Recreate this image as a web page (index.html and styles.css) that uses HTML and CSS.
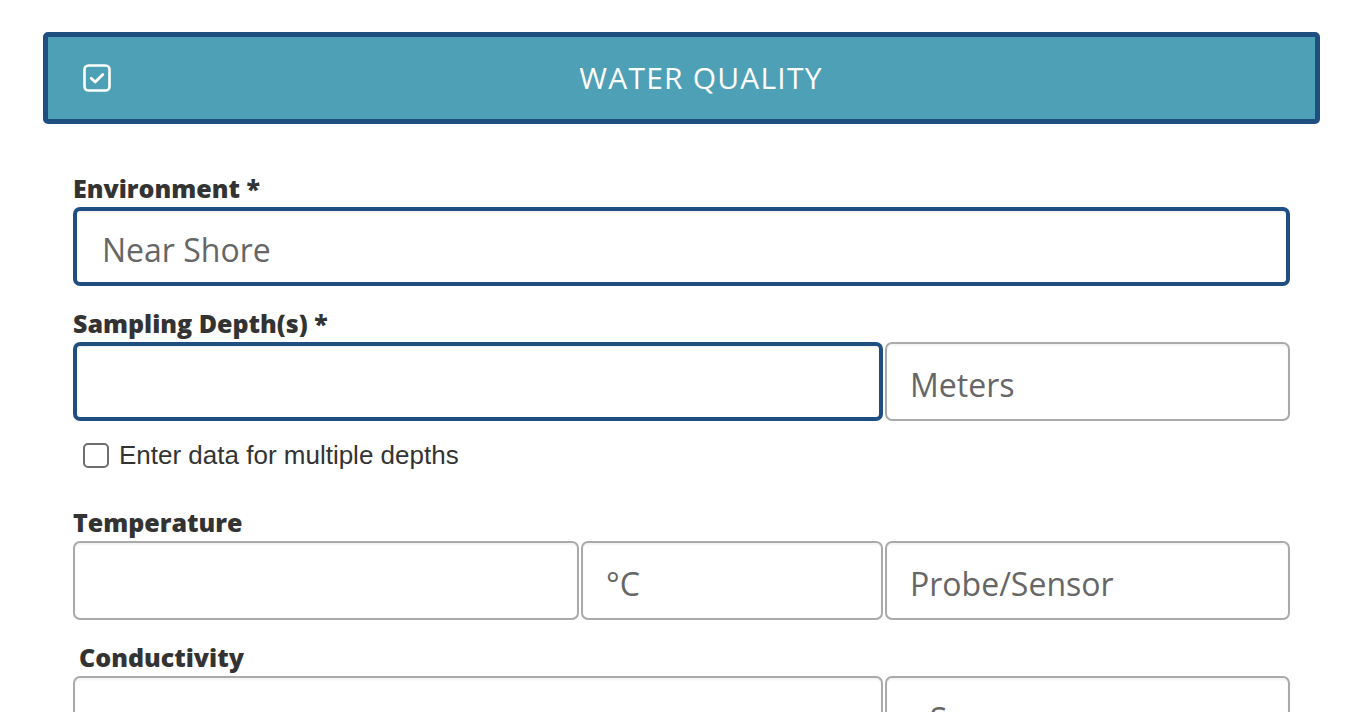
FILE: index.html
```html
<!DOCTYPE html>
<html lang="en">
<head>
<meta charset="utf-8">
<title>Water Quality</title>
<link rel="stylesheet" href="styles.css">
</head>
<body>
<div class="page">
  <div class="section-header">
    <svg class="hdr-icon" width="28" height="28" viewBox="0 0 28 28" aria-hidden="true">
      <rect x="1.5" y="1.5" width="25" height="25" rx="4" ry="4" fill="none" stroke="#fff" stroke-width="2.6"/>
      <path d="M8.2 14.2 L12.2 18 L19.8 10.4" fill="none" stroke="#fff" stroke-width="2.8" stroke-linecap="round" stroke-linejoin="round"/>
    </svg>
    <div class="hdr-title">WATER QUALITY</div>
  </div>

  <form class="form">
    <div class="field">
      <label class="lbl">Environment *</label>
      <div class="row row-1">
        <input class="inp active" type="text" value="Near Shore">
      </div>
    </div>

    <div class="field">
      <label class="lbl">Sampling Depth(s) *</label>
      <div class="row row-2">
        <input class="inp active" type="text" value="">
        <input class="inp" type="text" value="Meters">
      </div>
      <div class="check-row">
        <span class="box"></span>
        <span class="check-text">Enter data for multiple depths</span>
      </div>
    </div>

    <div class="field field-temp">
      <label class="lbl">Temperature</label>
      <div class="row row-3">
        <input class="inp" type="text" value="">
        <input class="inp" type="text" value="°C">
        <input class="inp" type="text" value="Probe/Sensor">
      </div>
    </div>

    <div class="field">
      <label class="lbl lbl-indent">Conductivity</label>
      <div class="row row-2">
        <input class="inp" type="text" value="">
        <input class="inp" type="text" value="µS">
      </div>
    </div>
  </form>
</div>
</body>
</html>
```

FILE: styles.css
```css
* { box-sizing: border-box; }

html, body {
  margin: 0;
  padding: 0;
  background: #ffffff;
  overflow: hidden;
}

body {
  font-family: "Open Sans", "Liberation Sans", Arial, sans-serif;
  color: #333333;
}

.page {
  padding: 32px 30px 0 43px;
  width: 1350px;
}

.section-header {
  width: 1277px;
  height: 92px;
  background: #4da0b5;
  border: 5px solid #1f4f80;
  border-radius: 5px;
  display: flex;
  align-items: center;
  padding: 0 24px 0 35px;
}

.hdr-icon {
  flex: 0 0 28px;
  display: block;
}

.hdr-title {
  flex: 1;
  text-align: center;
  color: #ffffff;
  font-size: 30px;
  letter-spacing: 1.2px;
  line-height: 38px;
  font-weight: 400;
}

.form {
  margin: 48px 0 0 30px;
  width: 1217px;
}

.field {
  margin-bottom: 21px;
}

.field-temp {
  margin-bottom: 21px;
}

.lbl {
  display: block;
  font-size: 25px;
  line-height: 32px;
  font-weight: 800;
  color: #333333;
  margin-bottom: 3px;
}

.lbl-indent {
  padding-left: 6px;
}

.row {
  display: grid;
  column-gap: 2px;
}

.row-1 { grid-template-columns: 1217px; }
.row-2 { grid-template-columns: 810px 405px; }
.row-3 { grid-template-columns: 506px 302px 405px; }

.inp {
  display: block;
  width: 100%;
  height: 79px;
  margin: 0;
  border: 2px solid #aaaaaa;
  border-radius: 7px;
  background: #ffffff;
  box-shadow: inset 0 2px 2px rgba(0, 0, 0, 0.05);
  padding: 5px 0 0 23px;
  font-family: "Open Sans", "Liberation Sans", Arial, sans-serif;
  font-size: 32px;
  color: #666666;
  outline: none;
}

.inp.active {
  border: 4px solid #1f4f80;
  padding-left: 25px;
}

.check-row {
  display: flex;
  align-items: center;
  margin-top: 22px;
  padding-left: 10px;
  height: 24px;
  margin-bottom: 39px;
}

.box {
  width: 26px;
  height: 25px;
  border: 2px solid #6e6e6e;
  border-radius: 5px;
  background: #fff;
  flex: 0 0 auto;
}

.check-text {
  margin-left: 10px;
  font-family: "Liberation Sans", Arial, sans-serif;
  font-size: 26px;
  color: #333333;
  line-height: 26px;
}
```
